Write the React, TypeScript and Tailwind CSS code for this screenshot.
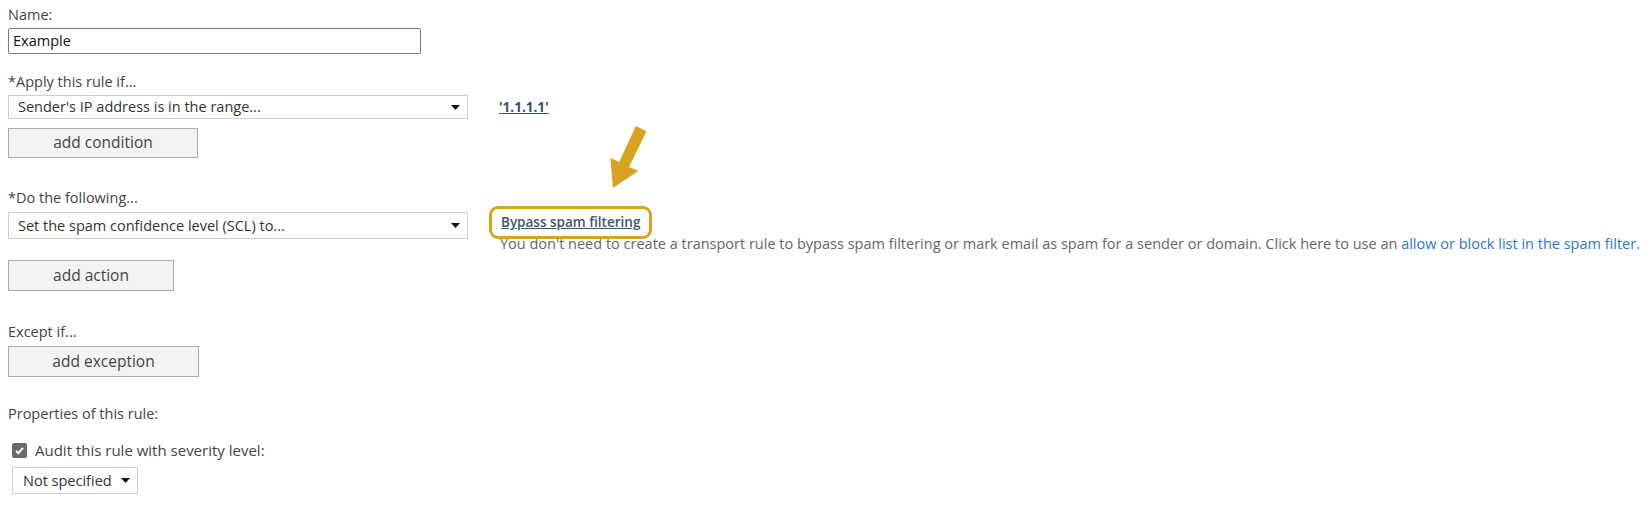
function Caret() {
    return (
        <svg width="9" height="5" viewBox="0 0 9 5" className="shrink-0">
            <polygon points="0,0 9,0 4.5,5" fill="#111" />
        </svg>
    );
}

function Select({ text, className }: { text: string; className: string }) {
    return (
        <div
            className={`flex items-center justify-between border border-[#cfcfcf] bg-white pl-[9px] pr-[7px] text-[#333] ${className}`}
        >
            <span>{text}</span>
            <Caret />
        </div>
    );
}

function Button({ label, className }: { label: string; className: string }) {
    return (
        <div
            className={`flex items-center justify-center border border-[#ababab] bg-[#f3f3f3] text-[15.5px] text-[#444] ${className}`}
        >
            {label}
        </div>
    );
}

export default function App() {
    return (
        <div className="relative min-h-[509px] bg-white pl-2 pt-[6px] font-['Open_Sans',sans-serif] text-[14.5px] text-[#444]">
            <div className="leading-[18px]">Name:</div>
            <div className="mt-[4px] flex h-[26px] w-[413px] items-center rounded-[2px] border border-[#7a7a7a] pl-[4px] text-[#111]">
                Example
            </div>

            <div className="mt-[19px] flex items-start">
                <div className="flex flex-col">
                    <div className="leading-[18px]">*Apply this rule if...</div>
                    <Select
                        text="Sender's IP address is in the range..."
                        className="mt-[4px] h-[24px] w-[460px]"
                    />
                    <Button label="add condition" className="mt-[9px] h-[30px] w-[190px]" />
                </div>
                <a className="ml-[31px] mt-[25px] text-[13.5px] font-bold leading-[18px] text-[#36536e] underline">
                    '1.1.1.1'
                </a>
            </div>

            <div className="mt-[31px] flex items-start">
                <div className="flex flex-col">
                    <div className="leading-[18px]">*Do the following...</div>
                    <Select
                        text="Set the spam confidence level (SCL) to..."
                        className="mt-[5px] h-[27px] w-[460px]"
                    />
                    <Button label="add action" className="mt-[21px] h-[31px] w-[166px]" />
                </div>
                <div className="ml-[21px] mt-[17px] flex flex-col items-start">
                    <div className="relative z-10 flex h-[33px] items-center rounded-[9px] border-[3px] border-[#d8a321] px-[9px]">
                        <a className="text-[13.5px] font-semibold text-[#3a5670] underline">Bypass spam filtering</a>
                    </div>
                    <div className="-mt-[4px] pl-[11px] leading-[17px] text-[#666]">
                        You don't need to create a transport rule to bypass spam filtering or mark email as spam for a sender or domain. Click here to use an{" "}
                        <a className="text-[#2a78c4]">allow or block list in the spam filter.</a>
                    </div>
                </div>
            </div>

            <div className="mt-[32px] leading-[18px]">Except if...</div>
            <Button label="add exception" className="mt-[5px] h-[31px] w-[191px]" />

            <div className="mt-[28px] leading-[18px]">Properties of this rule:</div>

            <div className="ml-[4px] mt-[19px] flex items-center gap-[8px]">
                <div className="flex h-[15px] w-[15px] items-center justify-center rounded-[2px] bg-[#6b6b6b]">
                    <svg width="11" height="11" viewBox="0 0 11 11">
                        <polyline points="2,5.8 4.4,8.2 9,2.8" fill="none" stroke="#fff" strokeWidth="2" />
                    </svg>
                </div>
                <span className="text-[15px] leading-[16px]">Audit this rule with severity level:</span>
            </div>
            <Select text="Not specified" className="ml-[4px] mt-[9px] h-[27px] w-[126px] pl-[10px] pr-[6px]" />

            <svg
                className="absolute left-[600px] top-[116px]"
                width="60"
                height="80"
                viewBox="0 0 60 80"
            >
                <polygon
                    points="46.5,15.2 29.1,50.9 38.2,55.1 13,72 10.3,41.9 19.2,46.1 35.8,10"
                    fill="#d8a321"
                />
            </svg>
        </div>
    );
}
